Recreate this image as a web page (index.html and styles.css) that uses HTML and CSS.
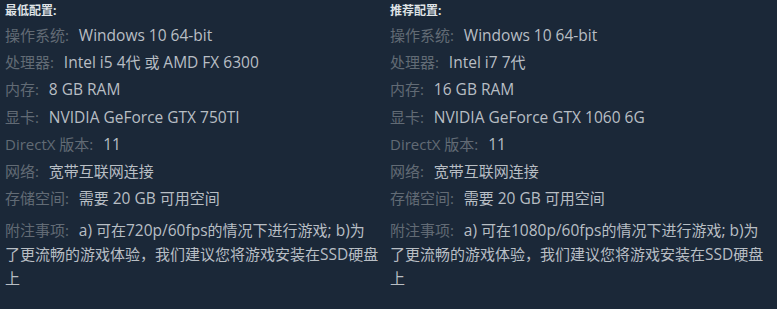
FILE: index.html
```html
<!DOCTYPE html>
<html lang="zh-CN">
<head>
<meta charset="utf-8">
<title>系统需求</title>
<link rel="stylesheet" href="styles.css">
</head>
<body>
<div class="reqs">
  <div class="col">
    <div class="head">最低配置:</div>
    <ul class="list">
      <li class="row"><span class="lbl">操作系统:</span> <span class="en">Windows 10 64-bit</span></li>
      <li class="row"><span class="lbl">处理器:</span> <span class="en">Intel i5 4</span>代 或 <span class="en">AMD FX 6300</span></li>
      <li class="row"><span class="lbl">内存:</span> <span class="en">8 GB RAM</span></li>
      <li class="row"><span class="lbl">显卡:</span> <span class="en">NVIDIA GeForce GTX 750TI</span></li>
      <li class="row"><span class="lbl">DirectX 版本:</span> <span class="en">11</span></li>
      <li class="row"><span class="lbl">网络:</span> 宽带互联网连接</li>
      <li class="row"><span class="lbl">存储空间:</span> 需要 <span class="en">20 GB</span> 可用空间</li>
      <li class="row note"><span class="lbl">附注事项:</span> <span class="en">a)</span> 可在<span class="en">720p/60fps</span>的情况下进行游戏<span class="en">; b)</span>为了更流畅的游戏体验，我们建议您将游戏安装在<span class="en">SSD</span>硬盘上</li>
    </ul>
  </div>
  <div class="col">
    <div class="head">推荐配置:</div>
    <ul class="list">
      <li class="row"><span class="lbl">操作系统:</span> <span class="en">Windows 10 64-bit</span></li>
      <li class="row"><span class="lbl">处理器:</span> <span class="en">Intel i7 7</span>代</li>
      <li class="row"><span class="lbl">内存:</span> <span class="en">16 GB RAM</span></li>
      <li class="row"><span class="lbl">显卡:</span> <span class="en">NVIDIA GeForce GTX 1060 6G</span></li>
      <li class="row"><span class="lbl">DirectX 版本:</span> <span class="en">11</span></li>
      <li class="row"><span class="lbl">网络:</span> 宽带互联网连接</li>
      <li class="row"><span class="lbl">存储空间:</span> 需要 <span class="en">20 GB</span> 可用空间</li>
      <li class="row note"><span class="lbl">附注事项:</span> <span class="en">a)</span> 可在<span class="en">1080p/60fps</span>的情况下进行游戏<span class="en">; b)</span>为了更流畅的游戏体验，我们建议您将游戏安装在<span class="en">SSD</span>硬盘上</li>
    </ul>
  </div>
</div>
</body>
</html>
```
FILE: styles.css
```css
html, body {
  margin: 0;
  padding: 0;
  background: #1b2838;
  height: 100%;
}
body {
  font-family: "Open Sans", "Noto Sans CJK SC", sans-serif;
  color: #b8bec4;
  font-size: 15px;
}
.reqs {
  display: grid;
  grid-template-columns: 385px 385px;
  padding-left: 5px;
}
.col {
  padding-right: 10.6px;
}
.head {
  margin-top: 3px;
  margin-bottom: 3px;
  font-size: 12px;
  line-height: 16px;
  font-weight: bold;
  color: #dfe3e6;
}
.list {
  list-style: none;
  margin: 0;
  padding: 0;
}
.row {
  line-height: 27.2px;
  white-space: nowrap;
}
.row.note {
  white-space: normal;
  line-height: 24px;
  margin-top: 6px;
}
.lbl {
  color: #626b75;
  margin-right: 6px;
}
.en {
  font-size: 15.5px;
}
```
